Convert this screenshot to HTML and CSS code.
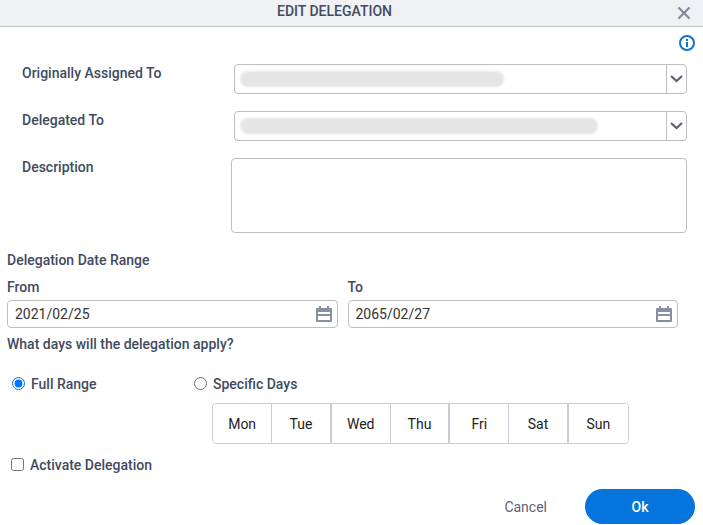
FILE: index.html
```html
<!DOCTYPE html>
<html lang="en">
<head>
    <meta charset="UTF-8">
    <meta name="viewport" content="width=device-width, initial-scale=1.0">
    <title>Edit Delegation</title>
    <link rel="stylesheet" href="styles.css">
</head>
<body>
    <header class="dialog-header">
        <h1 class="dialog-title">EDIT DELEGATION</h1>
        <button class="icon-button" type="button" aria-label="Close">
            <svg width="14" height="14" viewBox="0 0 14 14"><path d="M1.500 1.500l11 11M12.500 1.500l-11 11" fill="none" stroke="#858b98" stroke-width="2.200"/></svg>
        </button>
    </header>

    <form class="dialog-body">
        <div class="info-bar">
            <button class="icon-button" type="button" aria-label="Information">
                <svg width="16" height="16" viewBox="0 0 16 16"><circle cx="8" cy="8" r="7" fill="none" stroke="#1272c8" stroke-width="2"/><path d="M7 4h2v2H7zM7 7h2v5H7z" fill="#1272c8"/></svg>
            </button>
        </div>

        <div class="fields">
            <div class="field-row">
                <label for="assigned-to">Originally Assigned To</label>
                <div class="combo">
                    <select id="assigned-to"><option></option></select>
                    <span class="masked masked-short"></span>
                    <span class="combo-arrow">
                        <svg width="14" height="8" viewBox="0 0 14 8"><path d="M1 1l5.500 5L12 1" fill="none" stroke="#5b6373" stroke-width="2.200"/></svg>
                    </span>
                </div>
            </div>
            <div class="field-row">
                <label for="delegated-to">Delegated To</label>
                <div class="combo">
                    <select id="delegated-to"><option></option></select>
                    <span class="masked masked-long"></span>
                    <span class="combo-arrow">
                        <svg width="14" height="8" viewBox="0 0 14 8"><path d="M1 1l5.500 5L12 1" fill="none" stroke="#5b6373" stroke-width="2.200"/></svg>
                    </span>
                </div>
            </div>
            <div class="field-row">
                <label for="description">Description</label>
                <textarea id="description"></textarea>
            </div>
        </div>

        <h2 class="section-title">Delegation Date Range</h2>
        <div class="dates">
            <div class="date-field">
                <label for="date-from">From</label>
                <div class="date-box">
                    <input id="date-from" type="text" value="2021/02/25">
                    <button class="icon-button" type="button" aria-label="Pick start date">
                        <svg width="16" height="16" viewBox="0 0 16 16"><path fill="#8790a3" fill-rule="evenodd" d="M3 0h2v2h6V0h2v2h2a1 1 0 0 1 1 1v12a1 1 0 0 1-1 1H1a1 1 0 0 1-1-1V3a1 1 0 0 1 1-1h2zM2 6h1V5h2v1h6V5h2v1h1v2H2zM2 10h12v4H2z"/><path d="M3 5h2v1H3zM11 5h2v1h-2z" fill="#8790a3"/></svg>
                    </button>
                </div>
            </div>
            <div class="date-field">
                <label for="date-to">To</label>
                <div class="date-box">
                    <input id="date-to" type="text" value="2065/02/27">
                    <button class="icon-button" type="button" aria-label="Pick end date">
                        <svg width="16" height="16" viewBox="0 0 16 16"><path fill="#8790a3" fill-rule="evenodd" d="M3 0h2v2h6V0h2v2h2a1 1 0 0 1 1 1v12a1 1 0 0 1-1 1H1a1 1 0 0 1-1-1V3a1 1 0 0 1 1-1h2zM2 6h1V5h2v1h6V5h2v1h1v2H2zM2 10h12v4H2z"/><path d="M3 5h2v1H3zM11 5h2v1h-2z" fill="#8790a3"/></svg>
                    </button>
                </div>
            </div>
        </div>

        <h2 class="section-title question">What days will the delegation apply?</h2>
        <div class="choices">
            <div class="choice-full">
                <label class="check"><input type="radio" name="days" checked> Full Range</label>
            </div>
            <div class="choice-days">
                <label class="check"><input type="radio" name="days"> Specific Days</label>
                <div class="days">
                    <button type="button">Mon</button>
                    <button type="button">Tue</button>
                    <button type="button">Wed</button>
                    <button type="button">Thu</button>
                    <button type="button">Fri</button>
                    <button type="button">Sat</button>
                    <button type="button">Sun</button>
                </div>
            </div>
        </div>
        <label class="check activate"><input type="checkbox"> Activate Delegation</label>

        <footer class="dialog-footer">
            <button class="cancel" type="button">Cancel</button>
            <button class="ok" type="submit">Ok</button>
        </footer>
    </form>
</body>
</html>
```
FILE: styles.css
```css
* {
    box-sizing: border-box;
}
body {
    margin: 0;
    background: #fff;
    color: #414b5f;
    font: 500 14px/18px Roboto, Arial, sans-serif;
}
button, input, select, textarea {
    margin: 0;
    font: inherit;
}
button {
    cursor: pointer;
}
svg {
    display: block;
}
.dialog-header {
    display: flex;
    align-items: center;
    gap: 8px;
    height: 27px;
    padding-right: 12px;
    background: #f0f1f4;
    border-bottom: 1px solid #bfc0c3;
}
.dialog-title {
    flex: 1;
    margin: 0;
    padding: 0 0 4px 0;
    text-align: center;
    font-size: 14px;
    font-weight: 500;
}
.icon-button {
    padding: 0;
    border: 0;
    background: none;
}
.info-bar {
    display: flex;
    justify-content: flex-end;
    padding: 8px 8px 13px;
}
.fields {
    display: flex;
    flex-direction: column;
    gap: 17px;
    padding: 0 16px 0 22px;
}
.field-row {
    display: grid;
    grid-template-columns: 209px 1fr;
}
.combo {
    position: relative;
    margin-left: 3px;
}
.combo select {
    display: block;
    width: 100%;
    height: 30px;
    padding: 0 28px 0 8px;
    appearance: none;
    background: #fff;
    border: 1px solid #bfbfbf;
    border-radius: 4px;
}
.combo-arrow {
    position: absolute;
    top: 1px;
    right: 1px;
    bottom: 1px;
    display: flex;
    align-items: center;
    justify-content: center;
    width: 20px;
    border-left: 1px solid #bfbfbf;
    pointer-events: none;
}
.masked {
    position: absolute;
    top: 7px;
    left: 6px;
    height: 16px;
    border-radius: 8px;
    background: #e5e5e5;
    filter: blur(1px);
    pointer-events: none;
}
.masked-short {
    width: 264px;
}
.masked-long {
    width: 358px;
}
textarea {
    display: block;
    width: 100%;
    height: 75px;
    padding: 6px 8px;
    border: 1px solid #bfbfbf;
    border-radius: 4px;
    resize: none;
}
.section-title {
    margin: 18px 7px 0;
    font-size: 14px;
    font-weight: 500;
}
.dates {
    display: grid;
    grid-template-columns: 1fr 1fr;
    gap: 10px;
    padding: 9px 25px 0 7px;
}
.date-field {
    display: flex;
    flex-direction: column;
    gap: 4px;
}
.date-box {
    display: flex;
    align-items: center;
    height: 28px;
    padding: 0 5px 0 7px;
    border: 1px solid #bfbfbf;
    border-radius: 4px;
}
.date-box input {
    flex: 1;
    min-width: 0;
    padding: 0;
    border: 0;
    outline: 0;
    background: none;
    color: #333;
    font-weight: 400;
}
.question {
    margin-top: 7px;
}
.choices {
    display: flex;
    padding: 22px 12px 0;
}
.choice-full {
    width: 182px;
}
.check {
    display: flex;
    align-items: center;
    gap: 6px;
}
.check input {
    width: 13px;
    height: 13px;
    margin-bottom: 2px;
}
.days {
    display: grid;
    grid-template-columns: repeat(7, 1fr);
    width: 417px;
    height: 41px;
    margin: 10px 0 0 18px;
    border: 1px solid #c8ccd5;
    border-radius: 4px;
    overflow: hidden;
}
.days button {
    padding: 0;
    border: 0;
    border-right: 1px solid #c8ccd5;
    background: #fff;
    color: #222;
    font-weight: 400;
}
.days button:nth-child(even) {
    border-right-width: 2px;
}
.days button:last-child {
    border-right: 0;
}
.activate {
    padding: 12px 11px 0;
}
.dialog-footer {
    display: flex;
    align-items: center;
    justify-content: flex-end;
    gap: 24px;
    padding: 15px 8px 0;
}
.cancel, .ok {
    height: 35px;
    border: 0;
    border-radius: 18px;
}
.cancel {
    padding: 0 14px;
    background: none;
    color: #5a6274;
    font-weight: 400;
}
.ok {
    width: 110px;
    background: #0574dc;
    color: #fff;
}
```
